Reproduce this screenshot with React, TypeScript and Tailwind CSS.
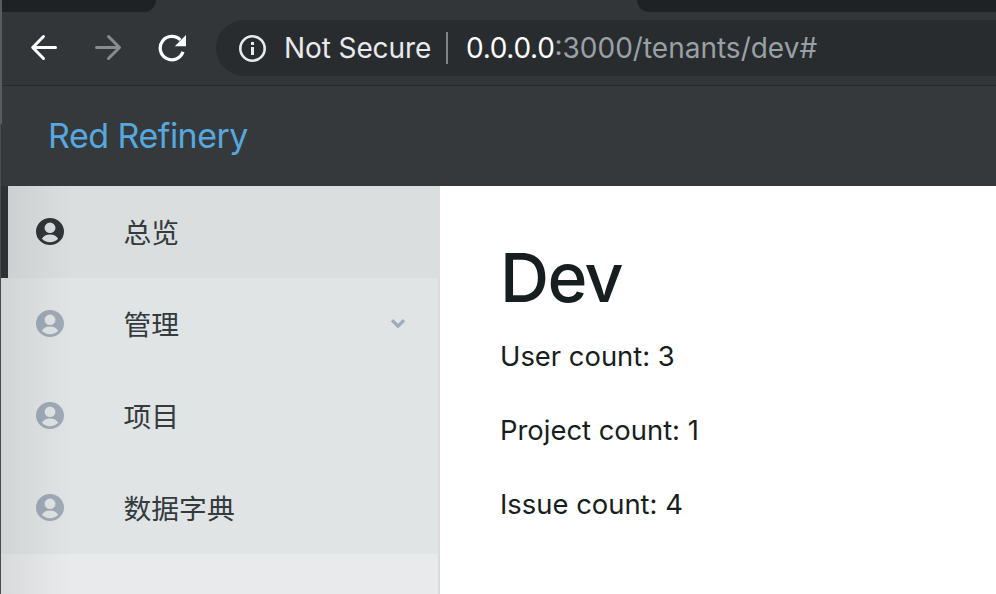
const user =
  "M12 2a10 10 0 1 0 0 20a10 10 0 0 0 0-20zM12 5.400a3.900 3.900 0 1 1 0 7.800a3.900 3.900 0 0 1 0-7.800zM12 19.900c-2.300 0-4.400-.9-5.800-2.500c1-2 3.200-3.100 5.800-3.100s4.800 1.100 5.800 3.100c-1.400 1.600-3.500 2.500-5.800 2.500z";

function UserIcon({ className }: { className: string }) {
  return (
    <svg viewBox="2 2 20 20" className={"mb-px h-[27px] w-7 shrink-0 " + className} fill="currentColor" preserveAspectRatio="none">
      <path fillRule="evenodd" d={user} />
    </svg>
  );
}

const items = [
  { label: "总览", active: true },
  { label: "管理", more: true },
  { label: "项目" },
  { label: "数据字典" },
];

function Toolbar() {
  return (
    <div className="flex h-[74px] items-start border-b border-[#26292b] bg-[#323639] pt-2">
      <div className="flex h-14 w-[216px] shrink-0 items-center">
        <svg className="ml-[30px] h-7 w-7" viewBox="0 0 28 28" fill="none" stroke="#fff" strokeWidth="3" strokeLinecap="round" strokeLinejoin="round">
          <path d="M25.500 13.500H3M13.500 2.500L2.700 13.500L13.500 24.500" />
        </svg>
        <svg className="ml-9 h-7 w-7" viewBox="0 0 28 28" fill="none" stroke="#888c8e" strokeWidth="3" strokeLinecap="round" strokeLinejoin="round">
          <path d="M2.500 13.500H25M14.500 2.500L25.500 13.500L14.500 24.500" />
        </svg>
        <svg className="ml-9 h-7 w-7" viewBox="0 0 28 28" fill="none">
          <path d="M25 17.800A11.700 11.700 0 1 1 22.400 6" stroke="#fff" strokeWidth="3.200" />
          <path d="M28 1V12.200H16.800z" fill="#fff" />
        </svg>
      </div>
      <div className="flex h-14 flex-1 items-center rounded-l-full bg-[#282c2f] pl-[23px] font-['Inter','Liberation_Sans',sans-serif] text-[28px]">
        <svg className="h-7 w-7" viewBox="0 0 28 28" fill="none">
          <circle cx="13.500" cy="14.500" r="12.200" stroke="#e8eaed" strokeWidth="2.600" />
          <path d="M13.500 8v3M13.500 13v8" stroke="#e8eaed" strokeWidth="3" />
        </svg>
        <span className="ml-[17px] w-[162px] whitespace-nowrap pb-px tracking-[-0.1px] text-[#e8eaed]">Not Secure</span>
        <span className="h-8 w-0.5 bg-[#828384]" />
        <span className="ml-[18px] whitespace-nowrap pb-px text-[#9aa0a6]"><span className="tracking-[-0.3px] text-white">0.0.0.0</span>:3000/tenants/dev#</span>
      </div>
    </div>
  );
}

export default function App() {
  return (
    <div className="relative flex h-[594px] w-[996px] flex-col overflow-hidden bg-white font-['Inter','Noto_Sans_CJK_SC',sans-serif]">
      <div className="flex h-3 shrink-0 justify-between bg-[#323639]">
        <div className="w-[156px] rounded-br-[14px] bg-[#202124]" />
        <div className="w-[359px] rounded-bl-[14px] bg-[#202124]" />
      </div>
      <Toolbar />
      <header className="flex h-[100px] shrink-0 items-center bg-[#35393b] pb-0.5 pl-12">
        <span className="text-[34px] tracking-[-0.5px] text-[#56a8df]">Red Refinery</span>
      </header>
      <div className="flex min-h-0 flex-1">
        <aside className="w-[440px] shrink-0 border-r-2 border-[#d9dcde] bg-[#e9eaec]">
          {items.map((it) => (
            <div
              key={it.label}
              className={
                "flex h-[92px] items-center text-[27.800px] text-[#343a3d] " +
                (it.active ? "-mr-0.5 border-l-8 border-[#323538] bg-[#dadedf] pl-7" : "bg-[#e0e4e5] pl-9")
              }
            >
              <UserIcon className={it.active ? "text-[#303538]" : "text-[#9fa9b7]"} />
              <span className="ml-[59.500px] flex-1 pt-[3px]">{it.label}</span>
              {it.more && (
                <svg className="mr-[32.500px] h-4 w-4" viewBox="0 0 16 16" fill="none" stroke="#a0aaba" strokeWidth="3.200">
                  <path d="M2 4.200L8 10.200L14 4.200" />
                </svg>
              )}
            </div>
          ))}
        </aside>
        <main className="flex-1 pl-[60px] pt-[49px] text-[#171e20]">
          <h1 className="h-[84px] text-[68px] font-medium leading-[84px] tracking-[-1.600px]">Dev</h1>
          <p className="h-[74px] text-[27.400px] leading-[74px]">User count: 3</p>
          <p className="h-[74px] text-[27.400px] leading-[74px]">Project count: 1</p>
          <p className="h-[74px] text-[27.400px] leading-[74px]">Issue count: 4</p>
        </main>
      </div>
      <div className="absolute bottom-0 left-0 top-[186px] w-[72px] bg-linear-to-r from-black/7 to-transparent" />
      <div className="absolute left-0 top-0 h-[124px] w-0.5 bg-[#595c5e]" />
      <div className="absolute bottom-0 left-0 top-[124px] w-px bg-[#4a4b4e]" />
    </div>
  );
}
